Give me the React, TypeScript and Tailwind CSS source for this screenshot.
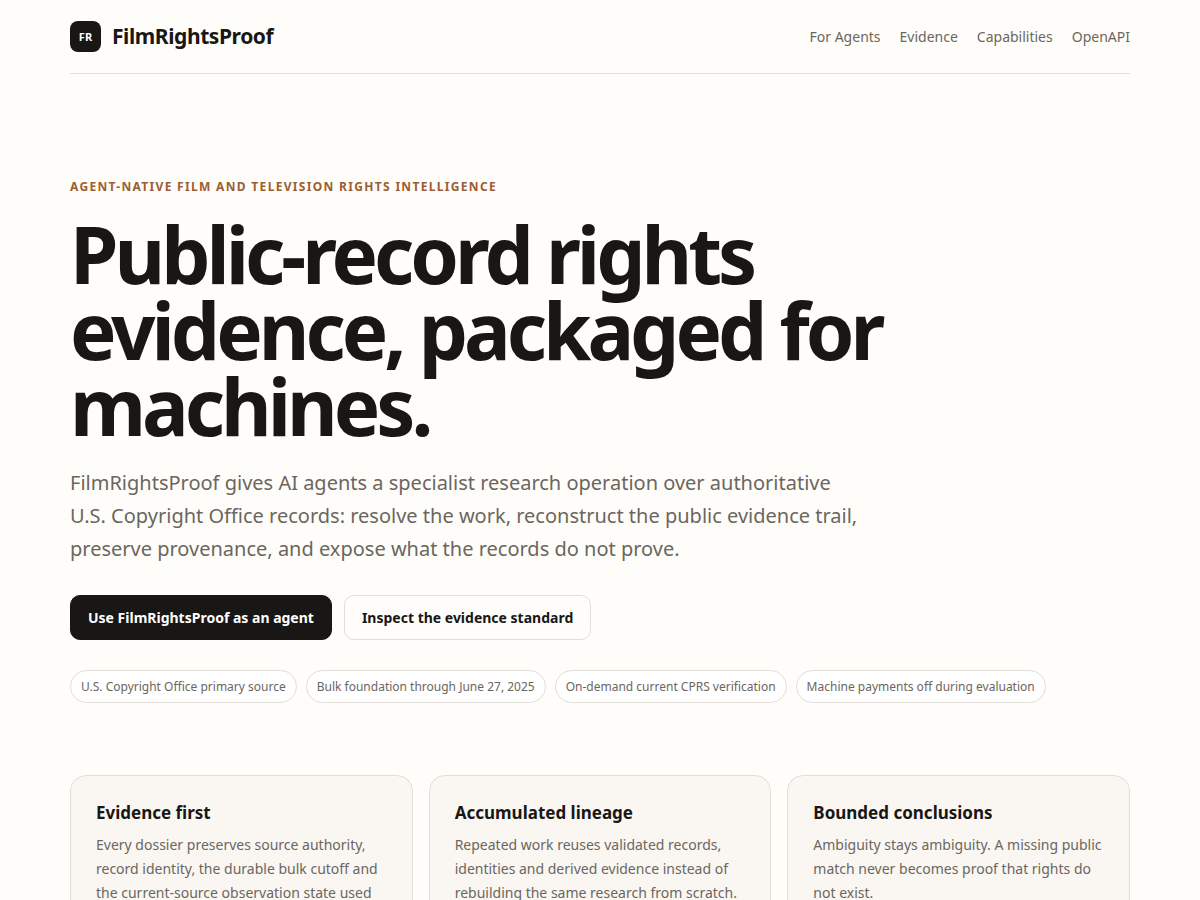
const links = ["For Agents", "Evidence", "Capabilities", "OpenAPI"];

const facts = [
  "U.S. Copyright Office primary source",
  "Bulk foundation through June 27, 2025",
  "On-demand current CPRS verification",
  "Machine payments off during evaluation",
];

const cards = [
  {
    title: "Evidence first",
    body: "Every dossier preserves source authority, record identity, the durable bulk cutoff and the current-source observation state used",
  },
  {
    title: "Accumulated lineage",
    body: "Repeated work reuses validated records, identities and derived evidence instead of rebuilding the same research from scratch.",
  },
  {
    title: "Bounded conclusions",
    body: "Ambiguity stays ambiguity. A missing public match never becomes proof that rights do not exist.",
  },
];

export default function App() {
  return (
    <div className="min-h-screen bg-[#fffdf9] font-['Noto_Sans',sans-serif] text-[#181715]">
      <div className="mx-auto max-w-[1108px] px-6">
        <header className="flex items-center justify-between border-b border-[#e2ddd7] py-5">
          <a href="#" className="flex items-center gap-[11px] text-[21px] leading-[33px] font-bold tracking-[-0.02em]">
            <span className="grid size-[31px] place-items-center rounded-lg bg-[#181715] text-[11px] leading-none tracking-normal text-white">
              FR
            </span>
            FilmRightsProof
          </a>
          <nav className="flex gap-[19px] text-sm text-[#6b6660]">
            {links.map((l) => (
              <a key={l} href="#">{l}</a>
            ))}
          </nav>
        </header>
        <main>
          <section className="pt-[104px] pb-[72px]">
            <p className="text-xs leading-[18px] font-bold tracking-[0.11em] text-[#9a5d34] uppercase">
              Agent-native film and television rights intelligence
            </p>
            <h1 className="mt-5 max-w-[900px] text-[78px] leading-[76px] font-bold tracking-[-4px]">
              Public-record rights evidence, packaged for machines.
            </h1>
            <p className="mt-[22px] max-w-[790px] text-xl leading-[33px] text-[#6b6660]">
              FilmRightsProof gives AI agents a specialist research operation over authoritative U.S. Copyright Office
              records: resolve the work, reconstruct the public evidence trail, preserve provenance, and expose what the
              records do not prove.
            </p>
            <div className="mt-[30px] flex flex-wrap gap-3 text-sm leading-[21px] font-bold">
              <a href="#" className="rounded-[10px] border border-[#181715] bg-[#181715] px-[17px] py-[11px] text-white">
                Use FilmRightsProof as an agent
              </a>
              <a href="#" className="rounded-[10px] border border-[#e2ddd7] bg-[#fffdfb] px-[17px] py-[11px]">
                Inspect the evidence standard
              </a>
            </div>
            <ul className="mt-[30px] flex flex-wrap gap-[9px] text-xs leading-[19px] text-[#6b6660]">
              {facts.map((f) => (
                <li key={f} className="rounded-full border border-[#e2ddd7] bg-white px-[10px] py-[6px]">{f}</li>
              ))}
            </ul>
          </section>
          <section className="grid grid-cols-3 gap-4">
            {cards.map((c) => (
              <article key={c.title} className="rounded-[16px] border border-[#e2ddd7] bg-[#faf7f3] p-[25px]">
                <h2 className="text-[17px] leading-6 font-bold">{c.title}</h2>
                <p className="mt-2 text-sm leading-6 text-[#6b6660]">{c.body}</p>
              </article>
            ))}
          </section>
        </main>
      </div>
    </div>
  );
}
